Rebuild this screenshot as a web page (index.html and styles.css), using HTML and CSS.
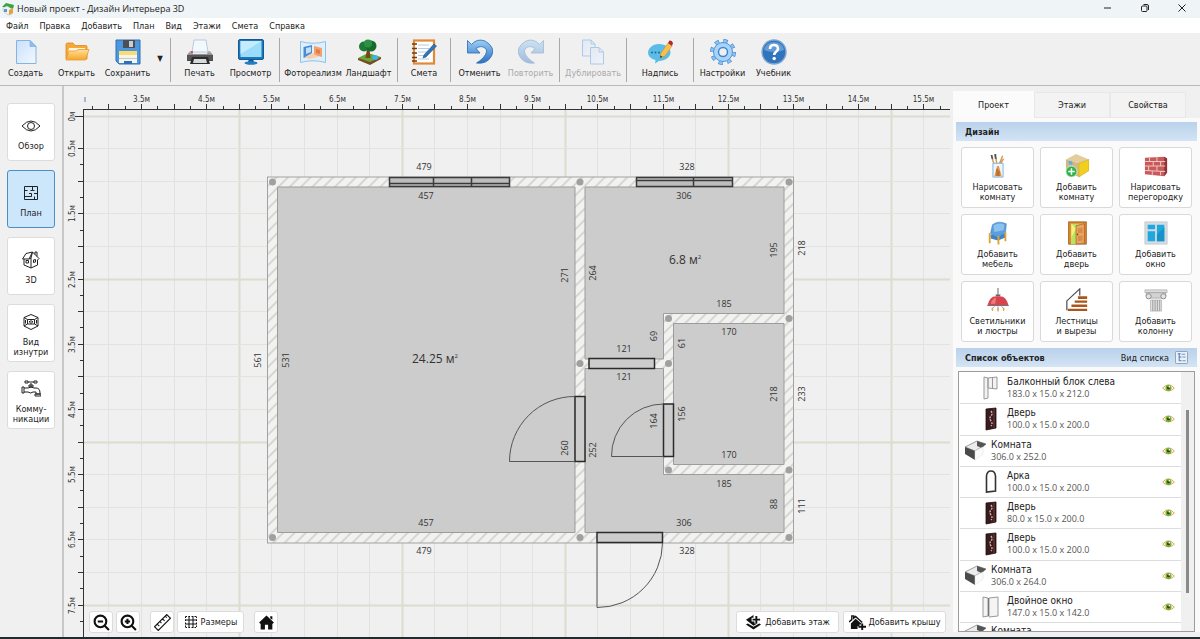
FILE: index.html
```
<!DOCTYPE html>
<html lang="ru">
<head>
  <meta charset="UTF-8">
  <meta name="viewport" content="width=device-width, initial-scale=1.0">
  <title>Новый проект - Дизайн Интерьера 3D</title>
  <link rel="stylesheet" href="styles.css">
</head>
<body>

  <!-- общие значки списка -->
  <svg class="defs" width="0" height="0" aria-hidden="true">
    <defs>
      <linearGradient id="blue" x1="0" y1="0" x2="0" y2="1"><stop offset="0" stop-color="#9cd0f6"/><stop offset="1" stop-color="#2870c4"/></linearGradient>
      <linearGradient id="paper" x1="0" y1="0" x2="1" y2="1"><stop offset="0" stop-color="#c9e0fb"/><stop offset="1" stop-color="#f4f9ff"/></linearGradient>
      <linearGradient id="gold" x1="0" y1="0" x2="0" y2="1"><stop offset="0" stop-color="#ffe09a"/><stop offset="1" stop-color="#f5a62c"/></linearGradient>
      <linearGradient id="grey" x1="0" y1="0" x2="0" y2="1"><stop offset="0" stop-color="#bbb"/><stop offset="1" stop-color="#444"/></linearGradient>
      <symbol id="eye" viewBox="0 0 12 9">
        <path d="M.6 4.6Q6-1.6 11.4 4.6 6 10 .6 4.6Z" fill="#fdf6dd" stroke="#d9a860" stroke-width=".9"/>
        <circle cx="6" cy="4.5" r="2.8" fill="#6fae2e"/><circle cx="6" cy="4.3" r="1.4" fill="#1d4a12"/><circle cx="6.8" cy="3.3" r=".8" fill="#fff"/>
      </symbol>
      <symbol id="door" viewBox="0 0 24 24">
        <path d="M7 2 17 1V21L7 23Z" fill="#3b1a1c" stroke="#1d0c0d" stroke-width=".8"/>
        <path d="M15 2V21" stroke="#6a3c38"/><path d="M12 4q2 3 0 5t0 5 0 5" fill="none" stroke="#c3b0ae" stroke-width="1.4" stroke-dasharray="2 1"/>
      </symbol>
      <symbol id="room" viewBox="0 0 24 24">
        <path d="M2 8 14 2 23 5 12 12Z" fill="#ececec" stroke="#777" stroke-width=".7"/>
        <path d="M14 2 23 5 19 9 14 7Z" fill="#555"/><path d="M2 8 12 12V21L2 15Z" fill="#4a4a4c"/><path d="M12 12 20 8V15L12 21Z" fill="#fafafa" stroke="#ddd" stroke-width=".5"/>
      </symbol>
    </defs>
  </svg>

  <header class="titlebar">
    <svg class="app-icon" viewBox="0 0 14 14"><path d="M1 5 5 1 13 3 12 7 6 5Z" fill="#37a53a"/><path d="M2 6 6 4 11 7V12L7 13 2 9Z" fill="#eef3f5" stroke="#a9b4b8" stroke-width=".5"/><path d="M8 8 12 6V11L8 13Z" fill="#e8a13a"/><path d="M3 7H6V10H3Z" fill="#5a98cf"/></svg>
    <span class="title">Новый проект - Дизайн Интерьера 3D</span>
    <div class="window-buttons">
      <button type="button" aria-label="Свернуть"><svg viewBox="0 0 10 10"><path d="M1 5H8"/></svg></button>
      <button type="button" aria-label="Восстановить"><svg viewBox="0 0 10 10"><rect x="1.5" y="3" width="5.5" height="5.5" rx="1"/><path d="M3.5 1.5H7Q8.5 1.5 8.5 3V7"/></svg></button>
      <button type="button" aria-label="Закрыть"><svg viewBox="0 0 10 10"><path d="M1.5 1.5 8.5 8.5M8.5 1.5 1.5 8.5"/></svg></button>
    </div>
  </header>

  <nav class="menubar">
    <a href="#">Файл</a>
    <a href="#">Правка</a>
    <a href="#">Добавить</a>
    <a href="#">План</a>
    <a href="#">Вид</a>
    <a href="#">Этажи</a>
    <a href="#">Смета</a>
    <a href="#">Справка</a>
  </nav>

  <div class="toolbar">
    <button type="button" class="tool"><svg viewBox="0 0 26 26"><path d="M3.5 1.5H17L23 7.5V24.5H3.5Z" fill="url(#paper)" stroke="#86b3e6"/><path d="M17 1.5V7.5H23Z" fill="#8fbdf0" stroke="#78a8df" stroke-width=".6"/></svg>Создать</button>
    <button type="button" class="tool"><svg viewBox="0 0 26 26"><path d="M2 20V5.500Q2 4 3.500 4H9L11 6.500H22Q23 6.500 23 8V20Z" fill="#f6a836" stroke="#e2871b" stroke-width=".8"/><path d="M5 9H21L22 14H4Z" fill="#fff6dd"/><path d="M2 21 5 12H12L14 10.500H25L21.500 21Z" fill="url(#gold)" stroke="#ea9a2c" stroke-width=".8"/></svg>Открыть</button>
    <button type="button" class="tool"><svg viewBox="0 0 26 26"><path d="M1 1H25V25H4L1 22Z" fill="#4d97df" stroke="#2f6fb8"/><rect x="8" y="1" width="12" height="8" fill="#4b5056"/><rect x="14" y="2" width="4" height="6" fill="#c9ced3"/><rect x="4" y="12" width="18" height="12" fill="#f5f5ee"/><rect x="4" y="12" width="18" height="4" fill="#fbdc6e"/><path d="M4 19.500H22" stroke="#c8c8c0"/><rect x="9" y="22" width="8" height="3" fill="#2f6fb8"/></svg>Сохранить</button>
    <button type="button" class="drop" aria-label="Варианты сохранения">▼</button>
    <span class="sep"></span>
    <button type="button" class="tool"><svg viewBox="0 0 26 26"><path d="M7 1H19L21 13H5Z" fill="#f3f8fd" stroke="#a8bfd8" stroke-width=".8"/><path d="M3 12H5L6 15H20L21 12H23L26 16V22H0V16Z" fill="url(#grey)"/><path d="M0 16H26V20H0Z" fill="#555"/><path d="M5 18H21L23 25H3Z" fill="#2c2c2e"/><path d="M7 20H19L20 24H6Z" fill="#d6d8da"/><circle cx="5" cy="13" r="1" fill="#d33"/></svg>Печать</button>
    <button type="button" class="tool"><svg viewBox="0 0 26 26"><rect x=".5" y=".5" width="25" height="20" rx="1.500" fill="#1c76bd" stroke="#14598f"/><rect x="2.500" y="2" width="21" height="16" fill="#9cdcfb"/><path d="M2.500 2H23.500L2.500 15Z" fill="#c4ecfd"/><path d="M11 20H15L16 23H10Z" fill="#14598f"/><ellipse cx="13" cy="24" rx="6.500" ry="1.700" fill="#1f7ec5"/></svg>Просмотр</button>
    <span class="sep"></span>
    <button type="button" class="tool wide"><svg viewBox="0 0 26 26"><path d="M.5 2.500Q13 6 25.500 2.500V23.500Q13 20 .5 23.500Z" fill="#dff0fd" stroke="#8ec0ee"/><path d="M3.500 8 12 6V16L3.500 19Z" fill="#4d8ad4"/><path d="M6 9 11 8V13L6 15Z" fill="#bfe0fb"/><path d="M14 7 22 9V18L14 16Z" fill="#f2a06c"/><path d="M12 14 19 18 9 20 5 18Z" fill="#f7cfa8"/><path d="M16 10 20 11V15L16 14Z" fill="#e37e48"/></svg>Фотореализм</button>
    <button type="button" class="tool"><svg viewBox="0 0 26 26"><path d="M2 19 12 14 25 18 14 25Z" fill="#62a83a"/><path d="M2 19 14 23 25 18V20L14 26 2 21Z" fill="#7a4a22"/><path d="M11 10H13.500L14.500 19H9.500Z" fill="#7c4518"/><circle cx="8" cy="7.500" r="5" fill="#1e7a35"/><circle cx="15" cy="7" r="5.500" fill="#176b2d"/><circle cx="12" cy="4.500" r="4" fill="#2d9145"/><ellipse cx="19" cy="18.500" rx="3" ry="2.500" fill="#3fb4e2"/></svg>Ландшафт</button>
    <span class="sep"></span>
    <button type="button" class="tool narrow"><svg viewBox="0 0 26 26"><rect x="3" y="1.500" width="20" height="23" fill="#fff" stroke="#e08a34" stroke-width="2.200"/><path d="M7 6H18M7 9.500H18M7 13H18M7 16.500H15M7 20H18" stroke="#b6cde0"/><path d="M1 5H6M1 9.500H6M1 14H6M1 18.500H6M1 22H6" stroke="#6b3c1b" stroke-width="1.300"/><path d="M23 5 25.500 7 15 18 12 19 13 16Z" fill="#2d78ba" stroke="#1d4f80" stroke-width=".6"/></svg>Смета</button>
    <span class="sep"></span>
    <button type="button" class="tool"><svg viewBox="0 0 26 26"><path d="M.5 1.500V14H13L9 9.500Q14 6 18 9T16 19Q13 22 9.500 24Q20 25.500 24.500 17T18 2Q10-1 4.500 5.500Z" fill="url(#blue)" stroke="#2c68b0" stroke-width=".8"/></svg>Отменить</button>
    <button type="button" class="tool" disabled><svg viewBox="0 0 26 26"><path d="M25.500 1.500V14H13L17 9.500Q12 6 8 9T10 19Q13 22 16.500 24Q6 25.500 1.500 17T8 2Q16-1 21.500 5.500Z" fill="url(#blue)" stroke="#2c68b0" stroke-width=".8"/></svg>Повторить</button>
    <span class="sep"></span>
    <button type="button" class="tool wide" disabled><svg viewBox="0 0 26 26"><path d="M2.500 1H11L15 5V17H2.500Z" fill="url(#paper)" stroke="#4f8fd8"/><path d="M11 1V5H15" fill="none" stroke="#4f8fd8"/><path d="M10.500 8.500H19L23.500 13V25H10.500Z" fill="url(#paper)" stroke="#4f8fd8"/><path d="M19 8.500V13H23.500" fill="none" stroke="#4f8fd8"/></svg>Дублировать</button>
    <span class="sep"></span>
    <button type="button" class="tool wide"><svg viewBox="0 0 26 26"><path d="M12 5C19 5 23.500 9 23.500 13.500S18 22 12 22L8 24.500 8.500 21C4 20 1 17 1 13.500S5 5 12 5Z" fill="#5cbce8"/><g fill="#1f6a99"><circle cx="5" cy="13.500" r="1"/><circle cx="8.500" cy="13.500" r="1"/><circle cx="12" cy="13.500" r="1"/></g><path d="M13 19 14 14 21 4 25 7 18 17Z" fill="#f8c04a" stroke="#c88a24" stroke-width=".5"/><path d="M21 4 22.500 1.500Q25 1 26 4L25 7Z" fill="#b3282d"/><path d="M13 19 13.500 16.500 15.500 17.700Z" fill="#333"/></svg>Надпись</button>
    <span class="sep"></span>
    <button type="button" class="tool"><svg viewBox="0 0 26 26"><circle cx="13" cy="13" r="11" fill="none" stroke="#4a90d9" stroke-width="4" stroke-dasharray="4.320 4.320"/><circle cx="13" cy="13" r="9.500" fill="#a9d4f8" stroke="#4a90d9"/><circle cx="13" cy="13" r="11" fill="none" stroke="#8fc4f2" stroke-width="2.500" stroke-dasharray="3 5.640" stroke-dashoffset="-.6"/><circle cx="13" cy="13" r="4.500" fill="#f0f0f0" stroke="#3f86d0" stroke-width="1.500"/></svg>Настройки</button>
    <button type="button" class="tool"><svg viewBox="0 0 26 26"><circle cx="13" cy="13" r="12" fill="#2f74bd" stroke="#7fa6cf" stroke-width="1.400"/><path d="M3 11Q5 3 13 3T23 11Q13 15 3 11Z" fill="#79aee2" opacity=".7"/><path d="M9 10Q9 6 13 6T17 10C17 12.500 13.200 12.500 13.200 16" fill="none" stroke="#fff" stroke-width="2.600"/><circle cx="13.200" cy="19.500" r="1.700" fill="#fff"/></svg>Учебник</button>
  </div>

  <div class="workspace">

    <nav class="views">
      <button type="button"><svg viewBox="0 0 20 20"><path d="M1 10Q10 0 19 10 10 20 1 10Z"/><circle cx="10" cy="10" r="3.500"/></svg>Обзор</button>
      <button type="button" class="active"><svg viewBox="0 0 20 20"><path d="M3.500 3.500H16.500V16.500H3.500ZM3.500 7.500H6.500M9.500 7.500H11.500V3.500M11.500 7.500H13.500M16.500 10.500H13M10.500 10.500V13.500H3.500M10.500 10.500H8M13.500 16.500V13.500"/></svg>План</button>
      <button type="button"><svg viewBox="0 0 20 20"><path d="M1.500 9 5 3.500 11.500 2 8 9ZM11.500 2 18 8.500 16.500 10V15L10 18V8L11.500 2M3 9V15L10 18M5 10.500H7.500V13H5ZM12.500 10V12.500L14.500 12V9.500ZM14 4.500V2H16V6.500M8 9 10 8"/></svg>3D</button>
      <button type="button"><svg viewBox="0 0 20 20"><path d="M10 2.500 17 5.500V14L10 17.500 3 14V5.500ZM3 5.500 6.500 7.500V12L3 14M17 5.500 13.500 7.500V12L17 14M6.500 7.500H13.500M6.500 12H13.500M10 7.500V12M8.500 9V10.500M11.500 9V10.500M4.500 8V11.500M15.500 8V11.500"/></svg>Вид<br>изнутри</button>
      <button type="button"><svg viewBox="0 0 20 20"><path d="M4 2H7V4H4ZM13 2H16V4H13ZM7 3H13M10 4V8M8 8H12V6H8ZM1 8H3V14H1ZM3 9H7Q10 7 13 9H15Q19 9 19 14V15H15V13H12Q10 15 7 13H3M14 15H20V17H14Z"/></svg>Комму-<br>никации</button>
    </nav>

    <main class="canvas">
      <svg class="plan" width="100%" height="100%">
        <defs>
          <pattern id="hatch" width="8" height="8" patternUnits="userSpaceOnUse" patternTransform="rotate(45)">
            <rect width="8" height="8" fill="#f2f2f1"/><path d="M1 0V8" stroke="#bababa"/>
          </pattern>
        </defs>
        <g id="grid"></g>
        <g transform="translate(-64 -86)">
          <rect x="267.500" y="177" width="526" height="366" fill="url(#hatch)" stroke="#a2a2a2"/>
          <g class="rooms">
            <path d="M277.500 187H575V532.500H277.500Z"/>
            <path d="M585 187H784V313.500H663.500V359H585Z"/>
            <path d="M673.500 323.500H784V464.500H673.500Z"/>
            <path d="M585 368.500H663.500V474.500H784V532.500H585Z"/>
          </g>
          <g class="nodes">
            <circle cx="272.500" cy="182" r="3.500"/><circle cx="580" cy="182" r="3.500"/><circle cx="789" cy="182" r="3.500"/>
            <circle cx="668.500" cy="318.500" r="3.500"/><circle cx="789" cy="318.500" r="3.500"/>
            <circle cx="580" cy="363.500" r="3.500"/><circle cx="668.500" cy="363.500" r="3.500"/>
            <circle cx="668.500" cy="470" r="3.500"/><circle cx="789" cy="470" r="3.500"/>
            <circle cx="272.500" cy="537.500" r="3.500"/><circle cx="580" cy="537.500" r="3.500"/><circle cx="789" cy="537.500" r="3.500"/>
          </g>
          <g class="openings">
            <path class="glass" d="M389.500 177.500H509.500V186.500H389.500ZM389.500 183.500H509.500M433.500 177V187M471.500 177V187"/>
            <path class="glass" d="M636.500 177.500H732.500V186.500H636.500ZM636.500 180.500H732.500M693.500 177V187"/>
            <path class="leaf" d="M589 358.500H654.500V368.500H589Z"/>
            <path class="leaf" d="M575 396.500H585V461.500H575Z"/>
            <path class="leaf" d="M663.500 404H673.500V456.500H663.500Z"/>
            <path class="leaf" d="M597 532.500H662.500V542.500H597Z"/>
            <path class="swing" d="M575 396.500A65 65 0 0 0 509.500 461.500H575"/>
            <path class="swing" d="M663.500 404A52 52 0 0 0 611.500 456.500H663.500"/>
            <path class="swing" d="M597 543V607.500A65 65 0 0 0 662.500 543"/>
          </g>
          <g class="sizes">
            <text x="424" y="170">479</text><text x="426" y="199">457</text>
            <text x="687" y="170">328</text><text x="684" y="199">306</text>
            <text x="724" y="307">185</text><text x="729" y="335">170</text>
            <text x="624" y="352">121</text><text x="624" y="380">121</text>
            <text x="729" y="458">170</text><text x="724" y="487">185</text>
            <text x="426" y="526">457</text><text x="424" y="554">479</text>
            <text x="684" y="526">306</text><text x="687" y="554">328</text>
            <text transform="translate(261 360) rotate(-90)">561</text>
            <text transform="translate(289 360) rotate(-90)">531</text>
            <text transform="translate(568 275) rotate(-90)">271</text>
            <text transform="translate(596 273) rotate(-90)">264</text>
            <text transform="translate(777 250) rotate(-90)">195</text>
            <text transform="translate(805 248) rotate(-90)">218</text>
            <text transform="translate(657 336) rotate(-90)">69</text>
            <text transform="translate(685 343) rotate(-90)">61</text>
            <text transform="translate(777 394) rotate(-90)">218</text>
            <text transform="translate(805 394) rotate(-90)">233</text>
            <text transform="translate(657 421) rotate(-90)">164</text>
            <text transform="translate(685 414) rotate(-90)">156</text>
            <text transform="translate(568 448) rotate(-90)">260</text>
            <text transform="translate(596 450) rotate(-90)">252</text>
            <text transform="translate(777 504) rotate(-90)">88</text>
            <text transform="translate(805 506) rotate(-90)">111</text>
          </g>
          <g class="areas">
            <text x="412" y="363">24.25 м<tspan class="sup" dy="-5">2</tspan></text>
            <text x="669" y="264">6.8 м<tspan class="sup" dy="-5">2</tspan></text>
          </g>
        </g>
        <g id="rulers"></g>
      </svg>

      <div class="canvas-tools">
        <button type="button" class="square" aria-label="Уменьшить"><svg viewBox="0 0 16 16"><circle cx="7" cy="7" r="5.500"/><path d="M4.500 7H9.500M11 11 15 15"/></svg></button>
        <button type="button" class="square" aria-label="Увеличить"><svg viewBox="0 0 16 16"><circle cx="7" cy="7" r="5.500"/><path d="M4.500 7H9.500M7 4.500V9.500M11 11 15 15"/></svg></button>
        <button type="button" class="square apart" aria-label="Линейка"><svg class="thin" viewBox="0 0 16 16"><path d="M.5 12 12 .5 15.500 4 4 15.500ZM3 9.500 5 11.500M5.500 7 7 8.500M8 4.500 10 6.500M10.500 2 12 3.500"/></svg></button>
        <button type="button" class="sizes-toggle"><svg class="thin" viewBox="0 0 14 14"><path d="M1.500 1.500H12.500M1.500 12.500H12.500M1.500 1.500V12.500M12.500 1.500V12.500" stroke-dasharray="1.500 1.500"/><path d="M5 1V13M9 1V13M1 5H13M1 9H13"/></svg>Размеры</button>
        <button type="button" class="square apart" aria-label="Домой"><svg class="solid" viewBox="0 0 16 16"><path d="M8 1.500 15 8 13.500 9.300V14.500H9.500V10H6.500V14.500H2.500V9.300L1 8ZM11.500 2H13.500V5.500L11.500 4Z"/></svg></button>
        <div class="right">
          <button type="button"><svg class="solid" viewBox="0 0 18 16"><path d="M1 5 9 0V3H7V7H10V9H13L9 11.500Z"/><path d="M1 10 3 9 9 12.500 15 9 17 10 9 15.500Z"/><path d="M11 1H13V4H16V6H13V9H11V6H8V4H11Z"/></svg>Добавить этаж</button>
          <button type="button"><svg class="solid" viewBox="0 0 18 16"><path d="M7 4 13 9V10H11V12H9V15H2V9Z"/><path d="M0 7.500 3 5V1H5V3.500L7 1.700 14 8" fill="none" stroke="#111" stroke-width="1.500"/><path d="M13 9H15V11.500H18V13.500H15V16H13V13.500H10V11.500H13Z"/></svg>Добавить крышу</button>
        </div>
      </div>
    </main>

    <aside class="side">
      <div class="tabs" role="tablist">
        <button type="button" role="tab" aria-selected="true">Проект</button>
        <button type="button" role="tab" aria-selected="false">Этажи</button>
        <button type="button" role="tab" aria-selected="false">Свойства</button>
      </div>

      <section class="panel">
        <h2 class="heading">Дизайн</h2>
        <div class="actions">
          <button type="button"><svg viewBox="0 0 26 26"><path d="M9 12 6 3M12 12 10 1M14 12 18 2M15 12 19 5" stroke="#d99a4e" stroke-width="1.500"/><path d="M5 1 7 1 8 6 6 5ZM9 0 11 0 11.500 6 9.500 5Z" fill="#555"/><path d="M7.500 10H18.500V25H7.500Z" fill="#eef6fd" stroke="#78aede"/><path d="M9 24 12 13 14 13 17 24Z" fill="#e59a48"/><path d="M12 24V16M14 24V18" stroke="#8c4f1d"/></svg>Нарисовать<br>комнату</button>
          <button type="button"><svg viewBox="0 0 26 26"><path d="M1 6 12 0 26 6 15 10Z" fill="#e4cd9c"/><path d="M1 6 15 10V25L1 19Z" fill="#d3b981"/><path d="M15 10 26 6V18L15 25Z" fill="#f1cf1c" stroke="#b9981c" stroke-width=".5"/><path d="M4 7V11L8 12V8Z" fill="#6ea8dc"/><circle cx="7" cy="19" r="6" fill="#33b24a" stroke="#e4ffe6" stroke-width=".8"/><path d="M3.500 19H10.500M7 15.500V22.500" stroke="#fff" stroke-width="1.600"/></svg>Добавить<br>комнату</button>
          <button type="button"><svg viewBox="0 0 26 26"><path d="M1 4 22 3 25 5V20L22 24 1 22Z" fill="#c85a5c"/><path d="M22 3 25 5V20L22 24Z" fill="#8f3138"/><path d="M1 8H23M1 13H23M1 18 23 19M6 4V8M14 3V8M10 8V13M18 8V13M5 13V18M14 13V18M9 18V23M18 19V23" stroke="#efc6bd" stroke-width="1.100"/></svg>Нарисовать<br>перегородку</button>
          <button type="button"><svg viewBox="0 0 26 26"><path d="M5 13 7 4Q13-1 22 3L21 14 10 17Z" fill="#5d9fdc" stroke="#3c77b4" stroke-width=".6"/><path d="M8 5Q14 1 20 4L19 10 9 12Z" fill="#8cc2f0"/><path d="M5 14 13 17 21 13V18L13 21 5 19Z" fill="#3f83c6"/><path d="M4 13V24M13.500 16V25.500M21 12V22" stroke="#e3a22f" stroke-width="2"/></svg>Добавить<br>мебель</button>
          <button type="button"><svg viewBox="0 0 26 26"><rect x="4" y="1" width="19" height="24" fill="#e68a2c" stroke="#9c5a1d"/><path d="M6.500 3H20V25H6.500Z" fill="#b9e35c"/><path d="M7 3 12 8 7 18Z" fill="#f6ef7a"/><path d="M12 5 21 3V24L12 25Z" fill="#eaa564" stroke="#9b5a22" stroke-width=".7"/><path d="M14 8 19 7V13H14ZM14 16H19V21L14 22Z" fill="#d98c48"/><circle cx="13.500" cy="14.500" r=".9" fill="#553"/></svg>Добавить<br>дверь</button>
          <button type="button"><svg viewBox="0 0 26 26"><rect x="1" y="1" width="24" height="24" fill="#d5dbe0" stroke="#c3cad0"/><path d="M4 4H12V9H4ZM14 4H22V22H14ZM4 11H12V22H4Z" fill="#1fa7e0"/><path d="M14 15 22 7V22H14Z" fill="#1792cb"/></svg>Добавить<br>окно</button>
          <button type="button"><svg viewBox="0 0 26 26"><path d="M13 0V9" stroke="#777" stroke-width="1.200"/><path d="M11 9H15L16 7H10Z" fill="#667"/><path d="M1.500 19Q4 9 11 9H15Q22 9 24.500 19Z" fill="#d9434b"/><path d="M5 17Q7 11 11 10.500L10 17Z" fill="#ee7b7d"/><path d="M1.500 19H24.500" stroke="#6c6c70"/><path d="M9 20 6 23M17 20 20 23M13 20V24" stroke="#888"/><path d="M7 22V25M13 22V25.500M19 22V25" stroke="#e0a556" stroke-width="1.500"/></svg>Светильники<br>и люстры</button>
          <button type="button"><svg viewBox="0 0 26 26"><path d="M14 9H24V12H14ZM10.500 13.500H24V16H10.500ZM7 18H24V20.500H7ZM3 22.500H24V25H3Z" fill="#a8561c"/><path d="M2 24V14L16 1V8" fill="none" stroke="#4a4a50" stroke-width="1.300"/></svg>Лестницы<br>и вырезы</button>
          <button type="button"><svg viewBox="0 0 26 26"><path d="M1 2H25V5H1Z" fill="#ddd" stroke="#a5a5a5" stroke-width=".7"/><path d="M3 5H23Q25 8 22 11H18L8 11H4Q1 8 3 5Z" fill="#d2d2d2" stroke="#999" stroke-width=".7"/><circle cx="5" cy="9" r="2.800" fill="#e4e4e4" stroke="#888"/><circle cx="21" cy="9" r="2.800" fill="#e4e4e4" stroke="#888"/><path d="M7 13H19V25H7Z" fill="#e0e0e0" stroke="#aaa" stroke-width=".7"/><path d="M9.500 13V25M12 13V25M14.500 13V25M17 13V25" stroke="#999"/></svg>Добавить<br>колонну</button>
        </div>

        <h2 class="heading">Список объектов
          <button type="button" class="view-mode">Вид списка <svg viewBox="0 0 14 14"><rect x=".5" y=".5" width="13" height="13" rx="1" fill="#e9f1fa" stroke="#8d9cad"/><path d="M3 3H6M4.500 3V10.500H7M4.500 6.500H7" fill="none" stroke="#3a6fae"/><path d="M7 3.500H11M8 6.500H11.500M8 10.500H11.500" stroke="#6c8fb8"/></svg></button>
        </h2>

        <div class="objects">
          <ul>
            <li class="child"><svg viewBox="0 0 24 24"><path d="M5 1 9 2V22L5 23ZM9 2 18 1V13L9 12ZM13.500 2V13" fill="#f2f2f2" stroke="#999"/></svg><p>Балконный блок слева<small>183.0 x 15.0 x 212.0</small></p><button type="button" aria-label="Видимость"><svg><use href="#eye"/></svg></button></li>
            <li class="child"><svg><use href="#door"/></svg><p>Дверь<small>100.0 x 15.0 x 200.0</small></p><button type="button" aria-label="Видимость"><svg><use href="#eye"/></svg></button></li>
            <li><svg><use href="#room"/></svg><p>Комната<small>306.0 x 252.0</small></p><button type="button" aria-label="Видимость"><svg><use href="#eye"/></svg></button></li>
            <li class="child"><svg viewBox="0 0 24 24"><path d="M7.500 22V6Q8 1 12 1T16.500 6V21Z" fill="#fff" stroke="#333" stroke-width="1.600"/></svg><p>Арка<small>100.0 x 15.0 x 200.0</small></p><button type="button" aria-label="Видимость"><svg><use href="#eye"/></svg></button></li>
            <li class="child"><svg><use href="#door"/></svg><p>Дверь<small>80.0 x 15.0 x 200.0</small></p><button type="button" aria-label="Видимость"><svg><use href="#eye"/></svg></button></li>
            <li class="child"><svg><use href="#door"/></svg><p>Дверь<small>100.0 x 15.0 x 200.0</small></p><button type="button" aria-label="Видимость"><svg><use href="#eye"/></svg></button></li>
            <li><svg><use href="#room"/></svg><p>Комната<small>306.0 x 264.0</small></p><button type="button" aria-label="Видимость"><svg><use href="#eye"/></svg></button></li>
            <li class="child"><svg viewBox="0 0 24 24"><path d="M4 2 9 3V21L4 22ZM10 3 19 2V21L10 22Z" fill="#f4f4f4" stroke="#999"/><path d="M9.500 3V21" stroke="#777"/></svg><p>Двойное окно<small>147.0 x 15.0 x 142.0</small></p><button type="button" aria-label="Видимость"><svg><use href="#eye"/></svg></button></li>
            <li class="cut"><svg><use href="#room"/></svg><p>Комната</p></li>
          </ul>
          <div class="scrollbar"><span></span></div>
        </div>
      </section>
    </aside>
  </div>

  <script src="plan.js"></script>
</body>
</html>
```
FILE: styles.css
```
* {
  box-sizing: border-box;
}

body {
  margin: 0;
  height: 100vh;
  display: flex;
  flex-direction: column;
  background: #f0f0f0;
  border-bottom: 2px solid #24292c;
  font-family: "DejaVu Sans Condensed", "Noto Sans", sans-serif;
  font-size: 9px;
  line-height: 10px;
  color: #222;
  overflow: hidden;
}

button {
  margin: 0;
  padding: 0;
  border: 0;
  background: none;
  font: inherit;
  color: inherit;
}

.defs {
  position: absolute;
}

/* заголовок и меню */
.titlebar {
  flex: none;
  display: flex;
  align-items: center;
  height: 18px;
  padding-left: 1px;
  background: #eff4f6;
  font-family: "Open Sans", sans-serif;
  font-size: 9px;
}

.app-icon {
  width: 14px;
  height: 14px;
  margin-right: 2px;
}

.window-buttons {
  margin-left: auto;
  display: flex;
}

.window-buttons button {
  width: 37px;
  height: 18px;
}

.window-buttons svg {
  width: 10px;
  height: 10px;
  fill: none;
  stroke: #222;
}

.menubar {
  flex: none;
  display: flex;
  align-items: center;
  gap: 11px;
  height: 15px;
  padding-left: 6px;
  background: #fff;
}

.menubar a {
  color: #222;
  text-decoration: none;
}

/* панель инструментов */
.toolbar {
  flex: none;
  display: flex;
  height: 53px;
  padding-top: 5px;
  border-bottom: 1px solid #b9b9b9;
}

.tool {
  flex: none;
  display: flex;
  flex-direction: column;
  align-items: center;
  gap: 3px;
  width: 51px;
  padding-top: 1px;
  white-space: nowrap;
}

.tool.wide {
  width: 60px;
}

.tool.narrow {
  width: 46px;
}

.tool svg {
  width: 26px;
  height: 26px;
}

.tool:disabled {
  color: #aaa;
}

.tool:disabled svg {
  opacity: 0.4;
}

.drop {
  width: 14px;
  height: 42px;
  font-size: 8px;
}

.sep {
  flex: none;
  width: 1px;
  height: 44px;
  margin: 0 3px;
  background: #a8a8a8;
}

.workspace {
  flex: 1;
  display: flex;
  min-height: 0;
}

/* виды слева */
.views {
  flex: none;
  width: 64px;
  padding: 17px 7px 0;
  border-right: 2px solid #c8c8c8;
  display: flex;
  flex-direction: column;
  gap: 9px;
}

.views button {
  height: 58px;
  border: 1px solid #dcdcdc;
  border-radius: 3px;
  background: #fff;
  display: flex;
  flex-direction: column;
  align-items: center;
  justify-content: center;
  gap: 5px;
  padding-top: 2px;
}

.views .active {
  background: #cce6fb;
  border-color: #4a8fc4;
}

.views svg {
  width: 20px;
  height: 20px;
  fill: none;
  stroke: #222;
}

/* план */
.canvas {
  flex: 1;
  min-width: 0;
  position: relative;
}

.plan {
  display: block;
}

.plan text {
  fill: #333;
}

#rulers text {
  font-size: 8px;
  text-anchor: middle;
}

.rooms path {
  fill: #ccc;
  stroke: #9c9c9c;
}

.nodes circle {
  fill: #a0a0a0;
}

.glass {
  fill: #bdbdbd;
  stroke: #3a3a3a;
  stroke-width: 1.5;
}

.leaf {
  fill: #ccc;
  stroke: #2a2a2a;
  stroke-width: 1.5;
}

.swing {
  fill: none;
  stroke: #555;
}

.sizes {
  font-family: "Open Sans", sans-serif;
  font-size: 9px;
  text-anchor: middle;
}

.areas {
  font-family: "Open Sans", sans-serif;
  font-size: 12px;
}

.areas .sup {
  font-size: 6px;
}

.canvas-tools {
  position: absolute;
  left: 25px;
  right: 4px;
  bottom: 4px;
  display: flex;
  gap: 3px;
}

.canvas-tools button {
  display: flex;
  align-items: center;
  justify-content: center;
  gap: 3px;
  height: 22px;
  border: 1px solid #dcdcdc;
  border-radius: 3px;
  background: #fff;
  white-space: nowrap;
}

.canvas-tools .square {
  width: 24px;
}

.canvas-tools .sizes-toggle {
  width: 67px;
}

.canvas-tools .apart {
  margin-left: 7px;
}

.canvas-tools .right {
  margin-left: auto;
  display: flex;
  gap: 4px;
}

.canvas-tools .right button {
  width: 103px;
}

.canvas-tools svg {
  flex: none;
  width: 17px;
  height: 17px;
  fill: none;
  stroke: #111;
  stroke-width: 2;
}

.canvas-tools .sizes-toggle svg {
  width: 14px;
  height: 14px;
}

.canvas-tools .thin {
  stroke-width: 1;
}

.canvas-tools .solid {
  fill: #111;
  stroke: none;
}

/* правая панель */
.side {
  flex: none;
  width: 250px;
  padding: 5px 3px 5px;
  display: flex;
  flex-direction: column;
}

.tabs {
  flex: none;
  display: flex;
  align-items: flex-end;
}

.tabs button {
  width: 76px;
  height: 26px;
  border: 1px solid #e8e8e8;
  background: #f3f3f3;
}

.tabs button[aria-selected="true"] {
  width: 81px;
  height: 27px;
  border-color: #fbfbfb;
  background: #fbfbfb;
}

.panel {
  flex: 1;
  min-height: 0;
  margin-right: -3px;
  padding: 4px 3px 0;
  background: #fafafa;
  display: flex;
  flex-direction: column;
}

.heading {
  flex: none;
  display: flex;
  align-items: center;
  justify-content: space-between;
  height: 19px;
  margin: 0;
  padding: 0 9px;
  background: linear-gradient(#b9d1ea, #d3e4f5);
  font-size: 9px;
  font-weight: bold;
}

.view-mode {
  display: flex;
  align-items: center;
  gap: 6px;
  font-weight: normal;
}

.view-mode svg {
  width: 13px;
  height: 13px;
}

.actions {
  flex: none;
  display: grid;
  grid-template-columns: repeat(3, 1fr);
  gap: 6px;
  padding: 6px 5px;
}

.actions button {
  height: 61px;
  border: 1px solid #d9d9d9;
  border-radius: 3px;
  background: #fff;
  display: flex;
  flex-direction: column;
  align-items: center;
  justify-content: center;
  gap: 4px;
}

.actions svg {
  width: 24px;
  height: 24px;
}

/* список объектов */
.objects {
  flex: 1;
  min-height: 0;
  margin: 4px 2px 0;
  border: 1px solid #9c9c9c;
  background: #fff;
  display: flex;
}

.objects ul {
  flex: 1;
  margin: 0;
  padding: 1px 0 0 1px;
  list-style: none;
  display: flex;
  flex-direction: column;
}

.objects li {
  flex: 1;
  min-height: 0;
  padding: 0 6px 0 3px;
  border-bottom: 1px solid #ddd;
  display: flex;
  align-items: center;
  gap: 4px;
}

.objects .child {
  padding-left: 19px;
}

.objects .cut {
  flex: none;
  height: 8px;
  align-items: flex-start;
  border: 0;
  overflow: hidden;
}

.objects li > svg {
  flex: none;
  width: 24px;
  height: 24px;
}

.objects p {
  flex: 1;
  margin: 0;
  font-size: 10px;
  line-height: 12px;
  white-space: nowrap;
}

.objects small {
  display: block;
  font-family: "Open Sans", sans-serif;
  font-size: 9px;
  color: #555;
}

.objects li button svg {
  display: block;
  width: 13px;
  height: 10px;
}

.objects .cut p {
  padding-top: 2px;
}

.scrollbar {
  flex: none;
  width: 13px;
  padding: 38px 5px;
  background: #f0f0f0;
  display: flex;
}

.scrollbar span {
  flex: 1;
  background: #8a8a8a;
}
```
FILE: plan.js
```
const NS = "http://www.w3.org/2000/svg";
const METER = 65.2;      // пикселей в метре
const ORIGIN_X = -150.7; // где на холсте 0 м
const ORIGIN_Y = 30;
const LEFT = 19;
const TOP = 23;

const plan = document.querySelector(".plan");
const grid = document.getElementById("grid");
const rulers = document.getElementById("rulers");
const width = plan.clientWidth;
const height = plan.clientHeight;

function line(parent, x1, y1, x2, y2, color, size) {
  const el = document.createElementNS(NS, "path");
  el.setAttribute("d", `M${x1} ${y1}L${x2} ${y2}`);
  el.setAttribute("stroke", color);
  el.setAttribute("stroke-width", size);
  parent.appendChild(el);
}

function label(text, x, y, angle) {
  const el = document.createElementNS(NS, "text");
  el.setAttribute("transform", `translate(${x} ${y}) rotate(${angle})`);
  el.textContent = text;
  rulers.appendChild(el);
}

// шаг сетки 0.5 м, каждая пятая линия толще
for (let i = 0; ORIGIN_X + i * METER / 2 < width; i++) {
  const x = Math.floor(ORIGIN_X + i * METER / 2) + 0.5;
  if (x < LEFT) continue;
  const bold = i % 5 === 0;
  line(grid, x, TOP, x, height, bold ? "#dcdccf" : "#e2e2de", bold ? 2 : 1);
}
for (let i = 0; ORIGIN_Y + i * METER / 2 < height; i++) {
  const y = Math.floor(ORIGIN_Y + i * METER / 2) + 0.5;
  const bold = i % 5 === 0;
  line(grid, LEFT, y, width, y, bold ? "#dcdccf" : "#e2e2de", bold ? 2 : 1);
}

line(rulers, LEFT, TOP + 0.5, width, TOP + 0.5, "#333", 1);
line(rulers, LEFT + 0.5, TOP, LEFT + 0.5, height, "#333", 1);
line(rulers, 21, 11, 21, 16, "#5b7ab5", 1);

// деления через 0.25 м
for (let i = 0; ORIGIN_X + i * METER / 4 < width; i++) {
  const x = Math.floor(ORIGIN_X + i * METER / 4) + 0.5;
  if (x < LEFT + 5) continue;
  line(rulers, x, i % 2 ? TOP - 3 : TOP - 5, x, TOP, "#333", 1);
  if (i % 4 === 2 && x > 40 && x < width - 15) label(i / 4 + "м", x, 16, 0);
}
for (let i = 0; ORIGIN_Y + i * METER / 4 < height; i++) {
  if (i === 1) continue;
  const y = Math.floor(ORIGIN_Y + i * METER / 4) + 0.5;
  line(rulers, i === 0 ? LEFT - 8 : i % 2 ? LEFT - 3 : LEFT - 5, y, LEFT, y, "#333", 1);
  if (i === 0 || i % 4 === 2) label(i / 4 + "м", 11, y, -90);
}
```
